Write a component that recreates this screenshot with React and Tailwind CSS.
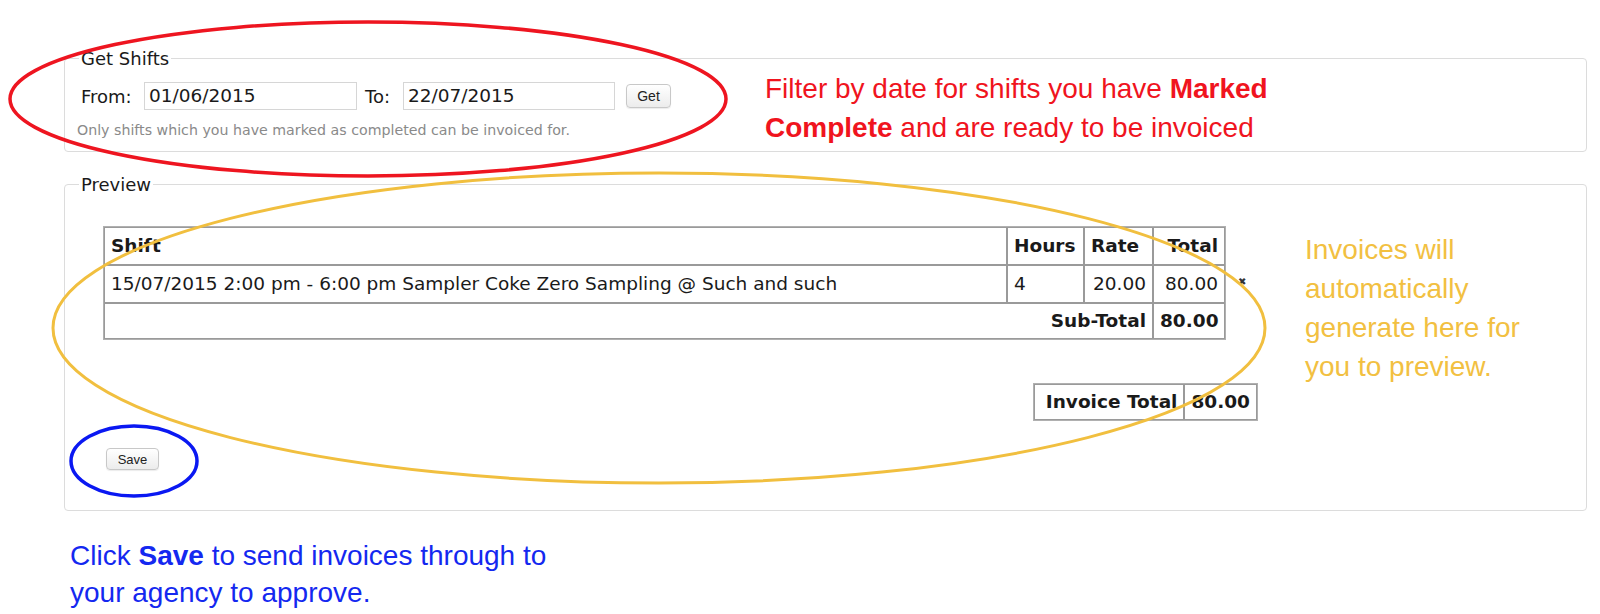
import React from "react";

const verdana = { fontFamily: '"DejaVu Sans", Verdana, sans-serif' };
const arial = { fontFamily: '"Liberation Sans", Arial, sans-serif' };

function Btn({ children, className = "" }) {
  return (
    <button
      className={
        "rounded-[4px] border border-[#c8c8c8] bg-gradient-to-b from-white to-[#ececec] text-[#222] leading-none shadow-[0_1px_1px_rgba(0,0,0,0.08)] " +
        className
      }
      style={arial}
    >
      {children}
    </button>
  );
}

export default function App() {
  const cell = "border border-[#9a9a9a] px-[6px] py-0 align-middle";
  return (
    <div className="relative min-h-[614px] w-[1600px] overflow-hidden bg-white text-[#1a1a1a]">
      <div className="pl-[64px] pr-[13px] pt-[48px]">
        {/* Get Shifts */}
        <fieldset className="rounded-[4px] border border-[#dcdcdc] px-[16px] pb-[12px]">
          <legend className="-ml-[2px] px-[2px] text-[18px] leading-[21px]" style={verdana}>
            Get Shifts
          </legend>
          <div className="flex items-start">
            <div className="w-[684px] shrink-0 pt-[13px]">
              <div className="flex items-center text-[18px]" style={verdana}>
                <span className="w-[63px]">From:</span>
                <div className="flex h-[28px] w-[213px] items-center border border-[#d6d6d6] px-[4px] text-[18.5px]">
                  01/06/2015
                </div>
                <span className="ml-[8px] w-[38px]">To:</span>
                <div className="flex h-[28px] w-[212px] items-center border border-[#d6d6d6] px-[4px] text-[18.5px]">
                  22/07/2015
                </div>
                <Btn className="ml-[11px] h-[24px] w-[45px] text-[14px]">Get</Btn>
              </div>
              <p className="-ml-[4px] mt-[11px] text-[14.2px] leading-[18px] text-[#8a8a8a]" style={verdana}>
                Only shifts which you have marked as completed can be invoiced for.
              </p>
            </div>
            <p className="-mb-[8px] text-[28px] leading-[39px] text-[#f0141e]" style={arial}>
              Filter by date for shifts you have <b>Marked</b>
              <br />
              <b>Complete</b> and are ready to be invoiced
            </p>
          </div>
        </fieldset>

        {/* Preview */}
        <fieldset className="mt-[22px] rounded-[4px] border border-[#dcdcdc] px-[16px] pb-[39px]">
          <legend className="-ml-[2px] px-[2px] text-[18px] leading-[21px]" style={verdana}>
            Preview
          </legend>
          <div className="flex items-start">
            <div className="ml-[22px] w-[1155px] shrink-0 pt-[31px]" style={verdana}>
              <div className="flex items-start">
                <table className="w-[1123px] table-fixed border-separate border-spacing-0 border border-[#b0b0b0] text-[18.5px]">
                  <thead>
                    <tr>
                      <th className={cell + " h-[38px] text-left font-bold"}>Shift</th>
                      <th className={cell + " h-[38px] w-[77px] text-left font-bold"}>Hours</th>
                      <th className={cell + " h-[38px] w-[69px] text-left font-bold"}>Rate</th>
                      <th className={cell + " h-[38px] w-[72px] text-right font-bold"}>Total</th>
                    </tr>
                  </thead>
                  <tbody>
                    <tr>
                      <td className={cell + " h-[38px] whitespace-nowrap"}>
                        15/07/2015 2:00 pm - 6:00 pm Sampler Coke Zero Sampling @ Such and such
                      </td>
                      <td className={cell + " h-[38px]"}>4</td>
                      <td className={cell + " h-[38px] text-right"}>20.00</td>
                      <td className={cell + " h-[38px] text-right"}>80.00</td>
                    </tr>
                    <tr>
                      <td colSpan={3} className={cell + " h-[36px] text-right font-bold"}>
                        Sub-Total
                      </td>
                      <td className={cell + " h-[36px] text-right font-bold"}>80.00</td>
                    </tr>
                  </tbody>
                </table>
                <span className="ml-[12px] mt-[50px] text-[10px] leading-[12px] text-[#333]">✖</span>
              </div>
              <div className="mt-[43px] flex justify-end">
                <table className="border-separate border-spacing-0 border border-[#b0b0b0] text-[18.5px] font-bold">
                  <tbody>
                    <tr>
                      <td className={cell + " h-[36px] w-[150px] text-right"}>Invoice Total</td>
                      <td className={cell + " h-[36px] w-[72px] text-right"}>80.00</td>
                    </tr>
                  </tbody>
                </table>
              </div>
              <Btn className="ml-[3px] mt-[27px] h-[22px] w-[53px] text-[13px]">Save</Btn>
            </div>
            <p className="ml-[47px] pt-[35px] text-[28px] leading-[39px] text-[#f2c041]" style={arial}>
              Invoices will
              <br />
              automatically
              <br />
              generate here for
              <br />
              you to preview.
            </p>
          </div>
        </fieldset>

        <p className="ml-[6px] mt-[26px] text-[28px] leading-[37px] text-[#1428f0]" style={arial}>
          Click <b>Save</b> to send invoices through to
          <br />
          your agency to approve.
        </p>
      </div>

      {/* annotation drawings */}
      <svg
        className="pointer-events-none absolute left-0 top-0"
        width="1600"
        height="614"
        viewBox="0 0 1600 614"
        fill="none"
      >
        <ellipse cx="368" cy="99" rx="358" ry="77" stroke="#ee1520" strokeWidth="3.5" />
        <ellipse cx="659" cy="328" rx="606" ry="155" stroke="#f1bf3f" strokeWidth="3" />
        <ellipse cx="134" cy="461" rx="63" ry="35" stroke="#0a18f2" strokeWidth="3.5" />
      </svg>
    </div>
  );
}
